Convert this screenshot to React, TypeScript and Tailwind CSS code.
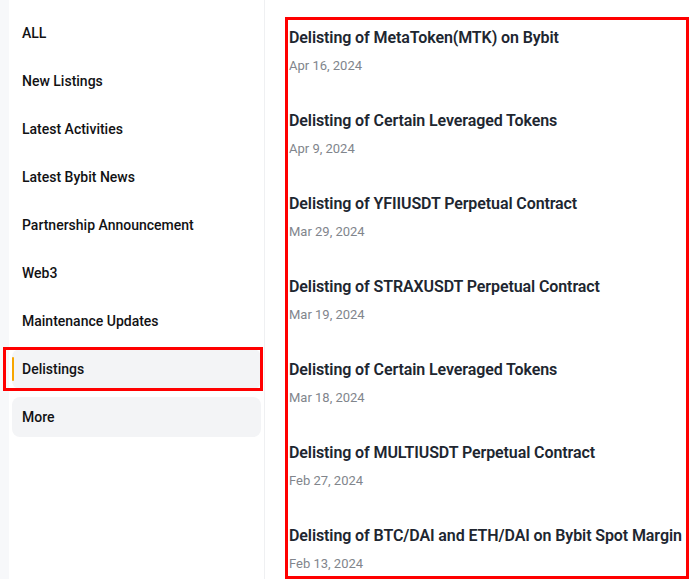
const categories = [
  'ALL',
  'New Listings',
  'Latest Activities',
  'Latest Bybit News',
  'Partnership Announcement',
  'Web3',
  'Maintenance Updates',
  'Delistings',
  'More',
];

const posts = [
  { title: 'Delisting of MetaToken(MTK) on Bybit', date: 'Apr 16, 2024' },
  { title: 'Delisting of Certain Leveraged Tokens', date: 'Apr 9, 2024' },
  { title: 'Delisting of YFIIUSDT Perpetual Contract', date: 'Mar 29, 2024' },
  { title: 'Delisting of STRAXUSDT Perpetual Contract', date: 'Mar 19, 2024' },
  { title: 'Delisting of Certain Leveraged Tokens', date: 'Mar 18, 2024' },
  { title: 'Delisting of MULTIUSDT Perpetual Contract', date: 'Feb 27, 2024' },
  { title: 'Delisting of BTC/DAI and ETH/DAI on Bybit Spot Margin', date: 'Feb 13, 2024' },
];

export default function App() {
  const active = 'Delistings';

  return (
    <div
      className="flex h-[579px] w-[700px] overflow-hidden bg-white"
      style={{ fontFamily: 'Roboto, "Noto Sans", sans-serif' }}
    >
      <div className="w-[9px] shrink-0 bg-[#f7f8fa]" />

      {/* category nav */}
      <aside className="w-[256px] shrink-0 rounded-tl-lg border-r border-[#eff0f2] bg-white pt-[13px] pl-[3px] pr-[3px]">
        <ul className="flex flex-col gap-2">
          {categories.map((c) => {
            const isActive = c === active;
            const filled = isActive || c === 'More';
            return (
              <li
                key={c}
                className={`relative flex h-10 items-center rounded-lg pl-[10px] text-sm font-medium text-[#121214] ${filled ? 'bg-[#f3f4f6]' : ''}`}
              >
                {isActive && (
                  <>
                    <span className="absolute left-0 top-2 h-6 w-[2px] rounded-full bg-[#f7a600]" />
                    <span className="pointer-events-none absolute -left-[9px] -right-[2px] -top-[2px] -bottom-[2px] border-[3px] border-[#ff0000]" />
                  </>
                )}
                {c}
              </li>
            );
          })}
        </ul>
      </aside>

      {/* article list */}
      <main className="min-w-0 flex-1 pl-5 pt-[17px]">
        <div className="h-[562px] w-[404px] border-[3px] border-[#ff0000] pl-px pt-[6px]">
          <ul className="flex flex-col gap-[33px]">
            {posts.map((p, i) => (
              <li key={i} className="flex flex-col gap-[6px]">
                <p className="whitespace-nowrap text-base font-semibold leading-6 tracking-[-0.1px] text-[#202630]">{p.title}</p>
                <p className="text-[13px] leading-5 text-[#81858c]">{p.date}</p>
              </li>
            ))}
          </ul>
        </div>
      </main>
    </div>
  );
}
